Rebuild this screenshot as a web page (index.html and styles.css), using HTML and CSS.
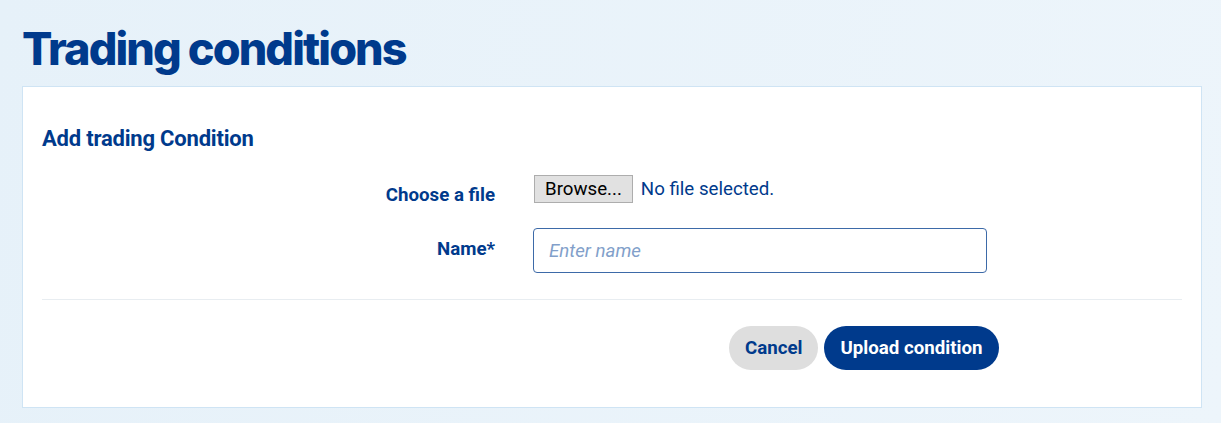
FILE: index.html
```html
<!DOCTYPE html>
<html lang="en">
<head>
<meta charset="utf-8">
<title>Trading conditions</title>
<link rel="stylesheet" href="styles.css">
</head>
<body>
<main class="page">
  <h1 class="title">Trading conditions</h1>
  <section class="card">
    <h2 class="card-title">Add trading Condition</h2>
    <form class="form">
      <div class="row row-file">
        <label class="label">Choose a file</label>
        <div class="field file-field">
          <span class="browse">Browse...</span>
          <span class="file-status">No file selected.</span>
        </div>
      </div>
      <div class="row row-name">
        <label class="label" for="name">Name*</label>
        <div class="field">
          <input id="name" class="input" type="text" placeholder="Enter name">
        </div>
      </div>
    </form>
    <hr class="divider">
    <div class="actions">
      <button class="btn btn-cancel" type="button">Cancel</button>
      <button class="btn btn-primary" type="button">Upload condition</button>
    </div>
  </section>
</main>
</body>
</html>
```

FILE: styles.css
```css
html, body {
  margin: 0;
  padding: 0;
}
body {
  background: linear-gradient(100deg, #e6f1f9 0%, #edf5fb 100%);
  font-family: Roboto, "Liberation Sans", sans-serif;
  color: #003a8c;
  height: 423px;
  overflow: hidden;
}
.page {
  padding: 22px 19px 0 22px;
}
.title {
  margin: 0;
  font-family: Inter, "Liberation Sans", sans-serif;
  font-weight: 800;
  font-size: 45px;
  line-height: 54px;
  letter-spacing: -1.9px;
  color: #003a8c;
  height: 64px;
}
.card {
  background: #fff;
  border: 1px solid #cfe4f4;
  padding: 38px 19px 37px 19px;
}
.card-title {
  margin: 0;
  font-size: 22px;
  font-weight: 700;
  letter-spacing: -0.2px;
  line-height: 28px;
  color: #003a8c;
}
.form {
  margin-top: 22px;
}
.row {
  display: grid;
  grid-template-columns: 453px 454px;
  column-gap: 38px;
  align-items: start;
}
.row-name {
  margin-top: 22px;
}
.label {
  display: block;
  text-align: right;
  font-size: 18.7px;
  line-height: 22px;
  font-weight: 700;
  color: #003a8c;
}
.row-file .label {
  margin-top: 9px;
}
.row-name .label {
  margin-top: 10px;
}
.file-field {
  display: flex;
  align-items: flex-start;
  gap: 8px;
}
.browse {
  display: inline-block;
  box-sizing: border-box;
  height: 28px;
  margin-left: 1px;
  padding: 0 10px;
  line-height: 26px;
  background: #e1e1e1;
  border: 1px solid #adadad;
  font-size: 18.7px;
  color: #000;
  font-family: Roboto, "Liberation Sans", sans-serif;
}
.file-status {
  font-size: 18.7px;
  line-height: 28px;
  color: #003a8c;
}
.input {
  display: block;
  box-sizing: border-box;
  width: 454px;
  height: 45px;
  border: 1px solid #3d6aa8;
  border-radius: 4px;
  padding: 0 15px;
  font-family: Roboto, "Liberation Sans", sans-serif;
  font-size: 18.7px;
  color: #003a8c;
  outline: none;
}
.input::placeholder {
  font-style: italic;
  color: #829fca;
}
.divider {
  margin: 26px 0 0 0;
  border: 0;
  border-top: 1px solid #e8edf1;
}
.actions {
  display: flex;
  gap: 6px;
  padding-left: 687px;
  margin-top: 26px;
}
.btn {
  height: 44px;
  border: 0;
  border-radius: 22px;
  font-family: Roboto, "Liberation Sans", sans-serif;
  font-size: 18.7px;
  font-weight: 700;
  padding: 0 16px;
  cursor: pointer;
}
.btn-cancel {
  background: #dedede;
  color: #003a8c;
}
.btn-primary {
  background: #003a8c;
  color: #fff;
}
```
